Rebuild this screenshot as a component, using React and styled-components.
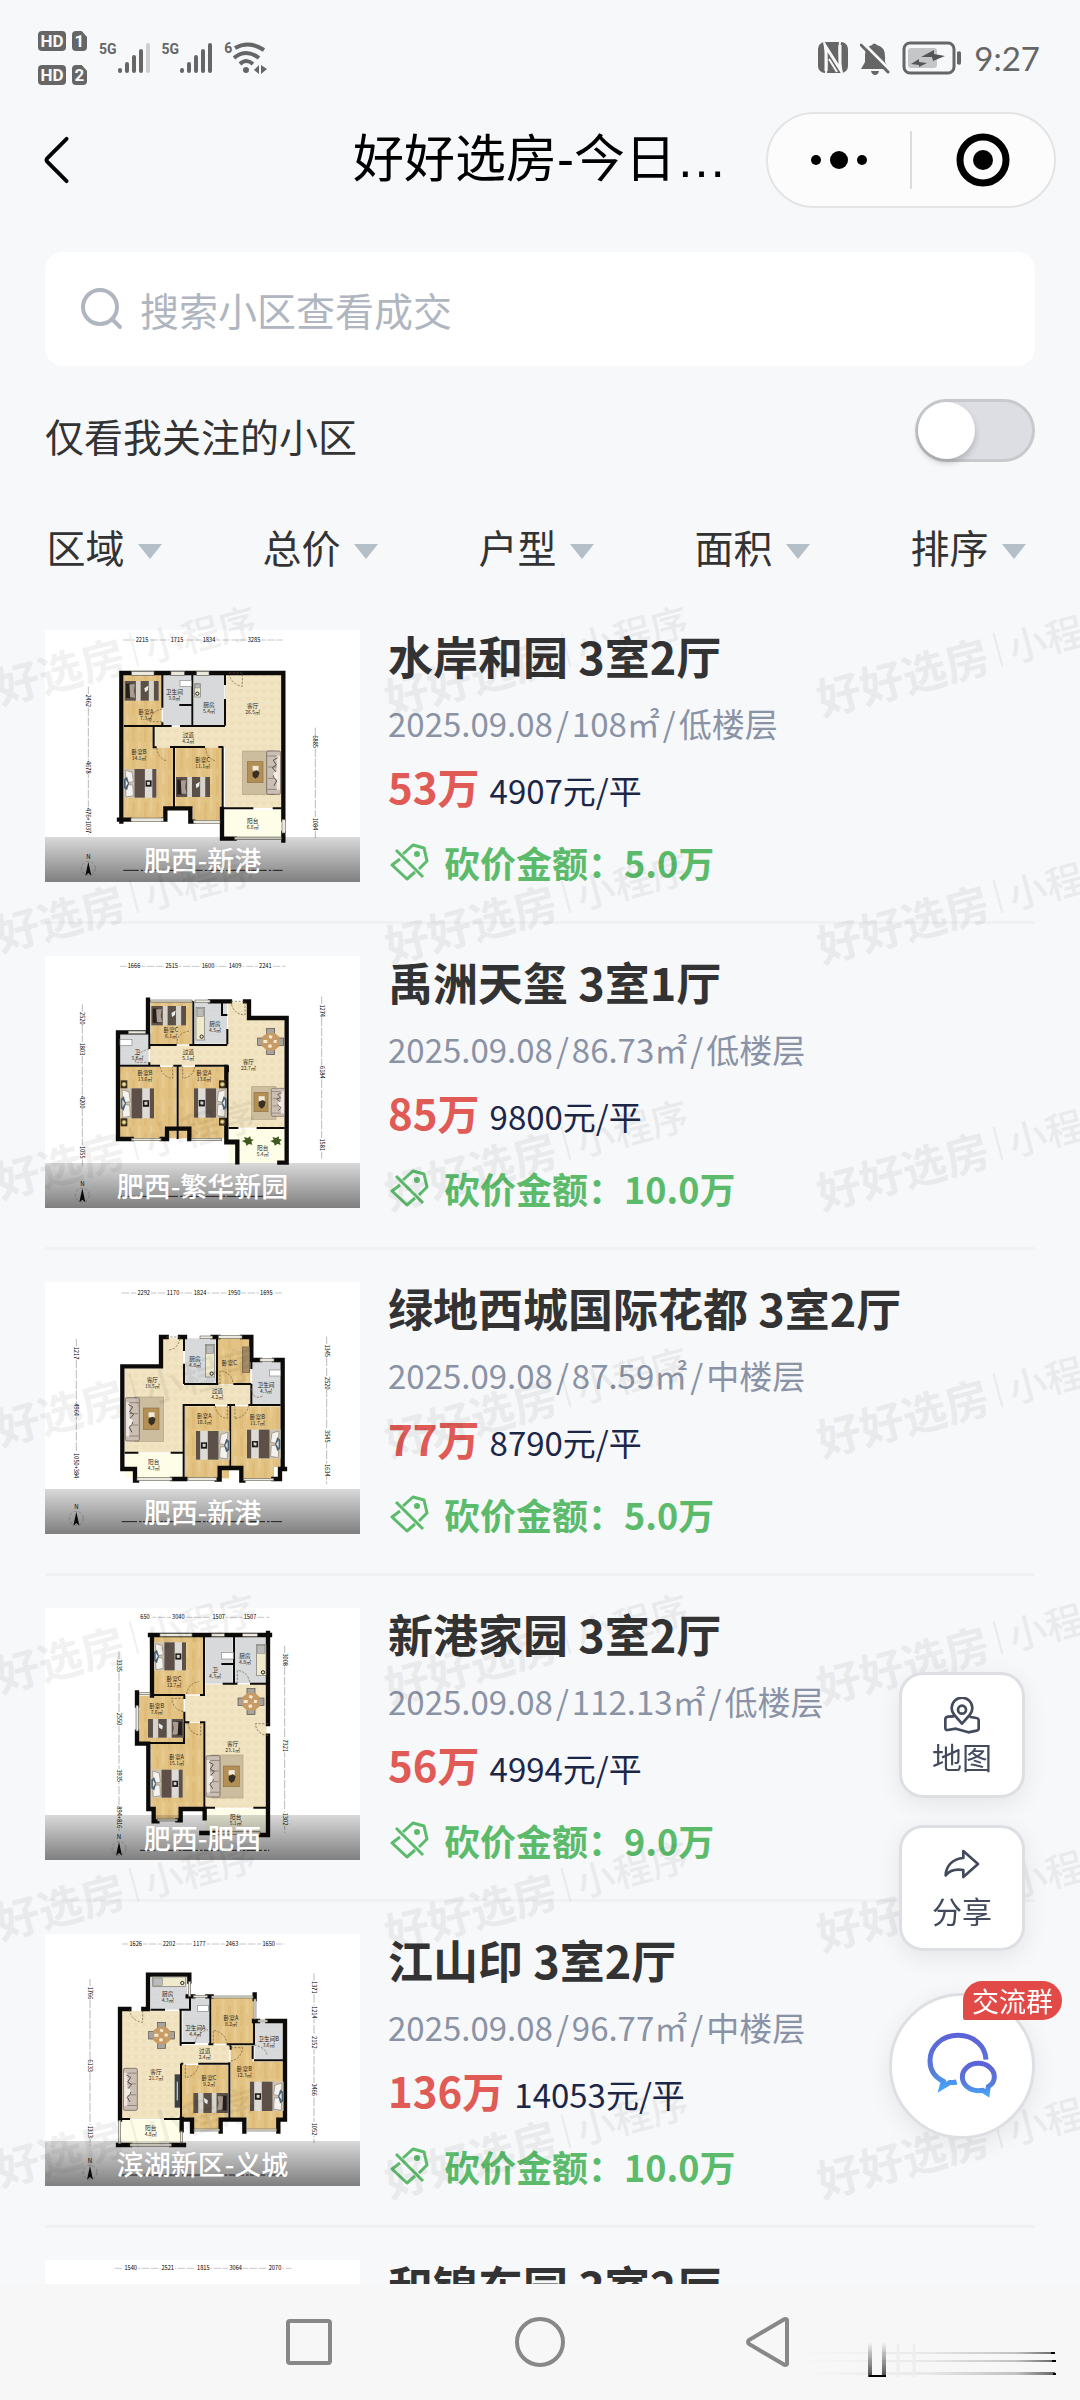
import React, { useState } from 'react';
import styled, { createGlobalStyle, css } from 'styled-components';

const GlobalStyle = createGlobalStyle`
	* {
		box-sizing: border-box;
	}
	body {
		margin: 0;
		background: #f7f8fa;
		font-family: 'Noto Sans CJK SC', 'Noto Sans', sans-serif;
		color: #333;
	}
	button, input, select {
		font-family: inherit;
		color: inherit;
		margin: 0;
		padding: 0;
		border: none;
		background: none;
	}
	h1, h2, p, ul {
		margin: 0;
		padding: 0;
	}
`;

/* ---------- floor plans ---------- */

const FILL = { wood: 'url(#wood)', tile: 'url(#tile)', grey: 'url(#greyTile)', balcony: '#fdfde8' };

// all plans share the same 945 x 756 space
const plans = {
	p1: {
		top: 63,
		rooms: [
			['wood', 282, 198, 113, 152], ['grey', 399, 198, 85, 152], ['grey', 491, 198, 92, 152],
			['tile', 585, 198, 170, 399], ['tile', 375, 354, 213, 62], ['wood', 282, 354, 88, 278],
			['wood', 282, 416, 148, 180], ['wood', 282, 590, 118, 40], ['wood', 436, 416, 140, 180],
			['wood', 488, 590, 88, 44], ['balcony', 582, 602, 174, 86],
		],
		thick: 'M267 632H300M274 638V192H760V632M760 672V695M400 632H406V598H481V638H490M576 600V689H614',
		thin: 'M397 198V296M397 340V350M487 198V350M585 198V228M585 270V350M282 351H425M450 351H585M448 288H487M371 351V415H380M420 414H525M565 414H580M432 414V595M578 414V600M582 598H670M728 598H754',
		windows: [[305, 187, 67, 12], [423, 187, 40, 12], [500, 187, 37, 12], [303, 627, 97, 10], [490, 634, 80, 9], [614, 684, 140, 8], [756, 632, 10, 40]],
		doors: ['M597 192H637V232Q608 228 597 198', 'M397 300Q360 308 360 338H397', 'M380 416Q384 450 412 456', 'M527 416Q530 450 558 456'],
		singles: [[284, 216, 102, 59], [438, 504, 102, 60]],
		doubles: [[282, 480, 97, 86]],
		sofas: [[710, 426, 42, 130, 1]], rugs: [[638, 426, 95, 131, 652, 458, 47, 63]],
		sinks: [[450, 214, 34, 18]], stoves: [[494, 224, 17, 40]],
		labels: [['卧室A', 348, 314, '7.3㎡'], ['卫生间', 433, 256, '3.0㎡'], ['厨房', 537, 295, '5.4㎡'], ['客厅', 668, 298, '26.5㎡'], ['过道', 475, 384, '4.2㎡'], ['卧室B', 327, 434, '14.1㎡'], ['卧室C', 518, 458, '11.1㎡'], ['阳台', 668, 641, '6.8㎡']],
		dims: [[336, '2215'], [441, '1715'], [537, '1834'], [672, '3285']], dimY: 99, span: [280, 758],
		left: [175, [275, '2462'], [475, '4678'], [635, '476+1037']], right: [856, [398, '6885'], [645, '1084']],
		bottom: 784, north: [175, 778],
	},
	p2: {
		top: 51,
		rooms: [
			['wood', 362, 190, 124, 126], ['grey', 270, 284, 86, 94], ['grey', 495, 190, 96, 124],
			['tile', 594, 190, 60, 60], ['tile', 594, 240, 170, 326], ['tile', 360, 320, 240, 60],
			['wood', 270, 384, 170, 214], ['wood', 445, 384, 145, 214], ['balcony', 596, 570, 170, 102],
		],
		thick: 'M354 182V280H264V600H305M395 600H411V569H478V600M589 384V610H622V670M590 608H622M354 280H348M540 187H600M645 187H657V237H770V671H748',
		thin: 'M358 318H440M478 318H592M358 284V330M358 370V380M490 187V318M576 192V228H592M270 380H390M430 380H455M495 380H592M443 380V600M592 270V316M594 380V400M596 567H625M680 567H764M362 187H487',
		windows: [[362, 183, 124, 6], [295, 276, 52, 8], [495, 183, 45, 8], [305, 598, 88, 7], [485, 598, 90, 7]],
		doors: ['M603 187H645V228Q610 226 603 190', 'M440 318Q440 280 480 276', 'M358 330Q322 336 316 370H358', 'M390 382Q396 414 428 418V382', 'M495 382Q490 414 458 418V382'],
		singles: [[364, 201, 104, 58]],
		doubles: [[272, 448, 100, 90], [590, 448, -98, 88]],
		sofas: [[724, 448, 40, 84, 1]], rugs: [[664, 443, 74, 98, 672, 460, 42, 58]],
		tables: [[722, 308]], sinks: [[270, 301, 36, 18]], stoves: [[498, 205, 26, 98]],
		lamps: [[282, 436], [282, 550], [577, 436], [577, 548]], plants: [[653, 606], [738, 606]],
		labels: [['卧室C', 423, 280, '6.1㎡'], ['厨房', 555, 260, '4.5㎡'], ['卫', 322, 344, '3.8㎡'], ['过道', 475, 345, '5.1㎡'], ['客厅', 655, 376, '22.7㎡'], ['卧室B', 345, 408, '13.6㎡'], ['卧室A', 522, 408, '13.6㎡'], ['阳台', 698, 632, '5.4㎡']],
		dims: [[312, '1666'], [425, '2515'], [534, '1600'], [615, '1409'], [706, '2241']], dimY: 88, span: [270, 766],
		left: [157, [238, '2520'], [330, '1803'], [490, '4200'], [640, '1055']], right: [875, [215, '1274'], [400, '6184'], [617, '1581']],
		bottom: 772, north: [157, 768],
	},
	p3: {
		top: 39,
		rooms: [
			['tile', 398, 208, 62, 100], ['grey', 465, 208, 92, 134], ['wood', 564, 208, 97, 138],
			['tile', 284, 298, 175, 252], ['tile', 458, 348, 204, 60], ['grey', 666, 278, 86, 130],
			['wood', 465, 412, 132, 216], ['wood', 606, 412, 145, 182], ['wood', 640, 590, 92, 40], ['balcony', 284, 554, 174, 72],
		],
		thick: 'M410 204H393V292H277V600H315V635H321M450 204H465M426 630H466M548 204H565M636 204H664V273H690M732 273H758V599M560 632H569V597H634V635H640M730 630H750V600H765',
		thin: 'M462 208V246M462 284V345M462 345H565M610 345H664M561 204V345M664 273V300M664 345V410M458 408H555M592 408H615M655 408H752M601 408V598M461 408V630M284 551H325M422 551H460',
		windows: [[510, 201, 38, 8], [565, 200, 71, 8], [690, 269, 42, 8], [321, 626, 105, 8], [474, 626, 86, 8], [641, 628, 90, 7]],
		doors: ['M410 204H450V208Q444 240 416 243', 'M570 345V305Q605 310 610 345', 'M664 358Q668 396 700 380', 'M555 410Q560 444 592 448V410', 'M615 448V410M615 448Q650 444 655 410'],
		singles: [], doubles: [[598, 486, -100, 86], [751, 482, -100, 86]],
		sofas: [[286, 386, 42, 130, 0]], rugs: [[315, 384, 86, 133, 340, 417, 47, 65]],
		closets: [[637, 234, 22, 76]], sinks: [[718, 303, 34, 18]], stoves: [[526, 226, 28, 98]],
		labels: [['客厅', 367, 338, '19.5㎡'], ['厨房', 495, 275, '4.8㎡'], ['卧室C', 598, 288, ''], ['卫生间', 708, 354, '4.3㎡'], ['过道', 562, 372, '4.2㎡'], ['卧室A', 523, 448, '10.1㎡'], ['卧室B', 682, 450, '11.7㎡'], ['阳台', 371, 584, '4.3㎡']],
		dims: [[341, '2292'], [429, '1170'], [510, '1824'], [612, '1950'], [709, '1695']], dimY: 78, span: [275, 756],
		left: [139, [252, '1217'], [422, '4964'], [590, '1050+384']], right: [890, [245, '1345'], [343, '2520'], [502, '3545'], [604, '1634']],
		bottom: 758, north: [139, 748],
	},
	p4: {
		top: 57,
		rooms: [
			['wood', 372, 142, 148, 174], ['grey', 526, 142, 82, 142], ['grey', 615, 142, 94, 140],
			['wood', 326, 320, 135, 142], ['tile', 465, 320, 66, 80], ['tile', 526, 286, 184, 370],
			['wood', 362, 402, 158, 254], ['wood', 376, 650, 72, 44], ['balcony', 526, 660, 184, 70],
		],
		thick: 'M360 138H720M366 138V320M321 310V350M321 428V464H355V660H371V697H382M442 694H452V660H524V688M714 132V405M714 440V738H690M514 732H560',
		thin: 'M522 142V318H510M366 318H465M612 142V284M574 225H612M578 284H622M660 284H712M463 318V330M463 368V400H478M462 400V462H326M510 400H523V660M524 656H555M670 656H712',
		windows: [[390, 134, 96, 8], [545, 134, 38, 8], [638, 134, 44, 8], [318, 350, 7, 76], [328, 311, 32, 6], [382, 690, 60, 6], [560, 728, 130, 8]],
		doors: ['M470 316Q474 282 508 278', 'M622 284V244Q655 248 660 284', 'M463 328H425Q430 364 463 368', 'M474 402Q478 436 512 438V402', 'M714 404H676Q680 436 714 440'],
		singles: [[460, 390, -106, 56]], doubles: [[372, 160, 96, 84], [364, 542, 94, 84]],
		sofas: [[528, 500, 42, 124, 0]], rugs: [[545, 498, 94, 129, 580, 531, 48, 62]],
		tables: [[663, 338]], sinks: [[574, 190, 36, 20]], stoves: [[680, 166, 28, 94]],
		labels: [['卧室C', 432, 275, '12.7㎡'], ['卫', 555, 248, '4.3㎡'], ['厨房', 645, 208, '4.8㎡'], ['卧室B', 380, 356, '7.6㎡'], ['客厅', 608, 470, '23.1㎡'], ['卧室A', 440, 510, '15.1㎡'], ['阳台', 617, 690, '5.1㎡']],
		dims: [[345, '650'], [445, '3040'], [566, '1507'], [660, '1507']], dimY: 91, span: [330, 718],
		left: [267, [230, '3335'], [390, '2550'], [560, '3935'], [685, '894+816']], right: [764, [212, '3008'], [470, '7321'], [690, '1302']],
		bottom: 784, north: [267, 778],
	},
	p5: {
		top: 45,
		rooms: [
			['grey', 362, 174, 110, 98], ['tile', 276, 276, 175, 324], ['grey', 458, 238, 80, 134],
			['wood', 545, 236, 126, 138], ['tile', 450, 378, 148, 56], ['grey', 674, 312, 86, 108],
			['wood', 456, 438, 138, 160], ['wood', 488, 590, 84, 42], ['wood', 602, 380, 66, 220], ['wood', 602, 428, 160, 170],
			['wood', 650, 594, 92, 38], ['balcony', 274, 602, 180, 74],
		],
		thick: 'M478 188V167H354V270H340M298 270H270V602M264 678H300M424 678H462M455 600V634M455 602H486V638M572 638V602H643V638M745 638V602H765V306H712M684 306H672M674 240V226M473 232H490M532 232H545',
		thin: 'M362 272H405M448 272H480V232M452 272V380M452 372H495M541 232V376M535 376H550M590 376H672V300M598 380H602M598 430V600M602 380V392M668 420V380M672 424H762M452 434H460M505 434H598M453 434V600M270 600H300M402 600H455',
		windows: [[476, 188, 6, 44], [490, 229, 42, 6], [545, 231, 124, 6], [672, 240, 6, 60], [684, 303, 28, 6], [492, 630, 76, 6], [650, 630, 90, 6], [300, 674, 124, 8], [266, 604, 6, 70], [452, 636, 5, 36]],
		doors: ['M298 272Q304 306 338 310V272', 'M495 372Q500 340 534 332', 'M550 376V334Q586 340 592 376', 'M602 386H638Q634 420 602 426', 'M466 436V476Q500 470 506 436', 'M672 378Q706 384 712 410'],
		singles: [[594, 522, -104, 60]], doubles: [[760, 488, -100, 88]],
		sofas: [[280, 448, 42, 126, 0]], rugs: [], tables: [[395, 349]], tvs: [[434, 466, 16, 100]],
		sinks: [[503, 259, 32, 18]], stoves: [[368, 174, 98, 28]],
		labels: [['厨房', 413, 232, '4.3㎡'], ['卫生间A', 496, 332, '4.4㎡'], ['卧室A', 603, 304, '8.2㎡'], ['卫生间B', 716, 366, '3.6㎡'], ['过道', 524, 402, '2.4㎡'], ['客厅', 378, 464, '21.7㎡'], ['卧室C', 537, 482, '9.2㎡'], ['卧室B', 643, 456, '12.3㎡'], ['阳台', 362, 634, '4.8㎡']],
		dims: [[317, '1626'], [417, '2202'], [508, '1177'], [606, '2463'], [716, '1650']], dimY: 81, span: [276, 764],
		left: [180, [222, '1766'], [440, '6133'], [638, '1313']], right: [852, [205, '1371'], [280, '1214'], [370, '2152'], [512, '3466'], [630, '1052']],
		bottom: 768, north: [180, 760],
	},
	p6: {
		top: 40,
		rooms: [], windows: [], doors: [], singles: [], doubles: [], sofas: [], rugs: [], labels: [],
		dims: [[302, '1540'], [413, '2521'], [520, '1815'], [617, '3064'], [735, '2070']], dimY: 71, span: [254, 784],
	},
};

const SingleBed = ({ box: [x, y, w, h] }) => (
	<g transform={`translate(${x} ${y}) scale(${w / 100} ${h / 60})`}>
		<rect width='100' height='60' fill='#d8d3ca' />
		<rect width='33' height='60' fill='#5d5048' />
		<rect x='4' y='8' width='16' height='44' fill='#241f1d' />
		<path d='M14 10h16l-3 20 4 20H16z' fill='#a89c92' />
		<rect x='47' width='24' height='60' fill='#5b5048' />
		<rect x='86' width='14' height='60' fill='#5b5048' />
		<path d='M58 22l12-8-2 14-8 6z' fill='#eee' />
	</g>
);

const DoubleBed = ({ box: [x, y, w, h] }) => (
	<g transform={`translate(${x} ${y}) scale(${w / 96} ${h / 86})`}>
		<rect width='96' height='86' fill='#dedbd6' />
		<rect width='30' height='86' fill='#cfc2ae' />
		<path d='M4 4l20 6 4 28-22 4zM4 46l22 2 2 32-22 4z' fill='#f4f2ee' stroke='#8c8478' strokeWidth='2' />
		<path d='M0 30l9-7 6 20-6 21-9-7z' fill='#4f6272' />
		<path d='M5 32l7 11-7 11z' fill='#dfe7ec' />
		<rect x='31' width='31' height='86' fill='#5c5048' />
		<rect x='84' width='12' height='86' fill='#5c5048' />
		<rect x='64' y='34' width='18' height='19' fill='#1d1b1a' />
		<path d='M68 39l9-1v9l-8 1z' fill='#d8d3ca' />
	</g>
);

const Sofa = ({ box: [x, y, w, h, flip] }) => (
	<g transform={`translate(${flip ? x + w : x} ${y}) scale(${(flip ? -w : w) / 42} ${h / 130})`}>
		<rect width='42' height='130' rx='5' fill='#cbbfb4' stroke='#5b4d47' strokeWidth='2' />
		<rect x='2' y='14' width='10' height='102' fill='#eee6df' />
		<path d='M12 15h28M12 48h26M12 82h26M12 115h28' stroke='#76665e' strokeWidth='2' />
		<path d='M9 20l13 8-9 14 12 8-12 14 9 12-10 14 8 14' fill='none' stroke='#594d4b' strokeWidth='3' />
		<path d='M10 60l12 6-4 16-10 4z' fill='#f3eeea' />
	</g>
);

const DiningTable = ({ at: [x, y] }) => (
	<g transform={`translate(${x} ${y})`}>
		<g fill='#a9a39d' stroke='#544c46' strokeWidth='2'>
			<rect x='-12' y='-39' width='24' height='16' />
			<rect x='-12' y='23' width='24' height='16' />
			<rect x='-39' y='-11' width='16' height='22' />
			<rect x='23' y='-11' width='16' height='22' />
		</g>
		<path d='M-26-14L-10-26H12L26-14V14L12 26H-12L-26 14z' fill='#c79b65' />
		<path d='M-22-5h12v9h-12zM-4-20l10 3-3 8-9-3zM10-6l9 2-2 8-9-1zM-8 10l10-2 2 9-10 2z' fill='#f6ead4' />
	</g>
);

const Dimension = ({ line, marks }) => (
	<g>
		<path d={`M${line} ${marks[0][0] - 42}V${marks[marks.length - 1][0] + 42}`} stroke='#999' strokeWidth='2' strokeDasharray='26 5' />
		{marks.map(([y, text]) => (
			<g key={y} transform={`translate(${line} ${y}) rotate(90)`}>
				<rect x={-text.length * 5} y='-9' width={text.length * 10} height='18' fill='#fff' />
				<text textAnchor='middle' y='6' fontSize='17'>{text}</text>
			</g>
		))}
	</g>
);

function FloorPlan({ plan, label }) {
	const p = plans[plan];
	return (
		<Plan viewBox={`45 ${p.top} 945 756`} role='img' aria-label={label}>
			<rect x='45' y={p.top} width='945' height='756' fill='#fff' />
			{p.rooms.map(([kind, x, y, w, h], i) => (
				<rect key={i} x={x} y={y} width={w} height={h} fill={FILL[kind]} />
			))}
			<path d={p.thick} fill='none' stroke='#0d0b09' strokeWidth='13' strokeLinecap='square' strokeLinejoin='miter' />
			<path d={p.thin} fill='none' stroke='#0d0b09' strokeWidth='6' />
			{p.windows.map(([x, y, w, h], i) => (
				<rect key={i} x={x} y={y} width={w} height={h} fill='#eceade' stroke='#6d6b60' strokeWidth='2' />
			))}
			{p.doors.map((d) => (
				<path key={d} d={d} fill='none' stroke='#6b5a3a' strokeWidth='2' strokeDasharray='7 4' />
			))}
			{p.rugs.map(([x, y, w, h, tx, ty, tw, th], i) => (
				<g key={i}>
					<rect x={x} y={y} width={w} height={h} fill='#cdbd9f' stroke='#b3a184' strokeWidth='2' />
					<rect x={tx} y={ty} width={tw} height={th} fill='#b48f55' stroke='#8d7347' strokeWidth='2' />
					<rect x={tx + tw / 3} y={ty + th / 5} width='18' height='14' fill='#f0eadc' />
					<path d={`M${tx + tw / 3} ${ty + th / 2}l12-6 9 6-4 14-9 6-8-8z`} fill='#352f25' />
				</g>
			))}
			{p.singles.map((b, i) => <SingleBed key={i} box={b} />)}
			{p.doubles.map((b, i) => <DoubleBed key={i} box={b} />)}
			{p.sofas.map((b, i) => <Sofa key={i} box={b} />)}
			{(p.tables || []).map((b, i) => <DiningTable key={i} at={b} />)}
			{(p.tvs || []).map(([x, y, w, h]) => (
				<g key={x}>
					<rect x={x} y={y} width={w} height={h} fill='#3b4146' />
					<rect x={x + 6} y={y + 22} width='4' height={h - 44} fill='#b9c2c8' />
				</g>
			))}
			{(p.closets || []).map(([x, y, w, h]) => (
				<rect key={x} x={x} y={y} width={w} height={h} fill='#a28b66' stroke='#6c5b40' strokeWidth='2' />
			))}
			{(p.sinks || []).map(([x, y, w, h]) => (
				<rect key={x} x={x} y={y} width={w} height={h} fill='#fff' stroke='#888' strokeWidth='2' />
			))}
			{(p.stoves || []).map(([x, y, w, h]) => (
				<g key={x}>
					<rect x={x} y={y} width={w} height={h} fill='#eeeacb' stroke='#777' strokeWidth='2' />
					<rect x={x + 3} y={y + 3} width={w > h ? 26 : w - 6} height={w > h ? h - 6 : h / 4} fill='#bbb' stroke='#444' />
					<circle cx={x + w - 9} cy={y + h - 10} r='5' fill='none' stroke='#222' strokeWidth='3' />
				</g>
			))}
			{(p.lamps || []).map(([x, y]) => (
				<g key={`${x}-${y}`}>
					<rect x={x - 10} y={y - 12} width='20' height='24' fill='#3c2d1b' />
					<circle cx={x} cy={y} r='6' fill='#e6d9a0' stroke='#a8924f' strokeWidth='2' />
				</g>
			))}
			{(p.plants || []).map(([x, y]) => (
				<path key={x} d={`M${x - 17} ${y}l10-4-4-8 11 3 8-5 1 8 9 2-7 6 3 9-10-2-8 5-2-8z`} fill='#40571d' />
			))}
			<g fill='#2d2416' fontSize='17' textAnchor='middle'>
				{p.labels.map(([name, x, y, area]) => (
					<g key={name}>
						<text x={x} y={y}>{name}</text>
						<text x={x} y={y + 18} fontSize='15'>{area}</text>
					</g>
				))}
			</g>
			<path d={`M${p.span[0]} ${p.dimY - 6}H${p.span[1]}`} stroke='#aaa' strokeWidth='2' strokeDasharray='22 5' />
			{p.dims.map(([x, text]) => (
				<g key={x}>
					<rect x={x - 22} y={p.dimY - 15} width='44' height='18' fill='#fff' />
					<text x={x} y={p.dimY} textAnchor='middle' fontSize='17'>{text}</text>
				</g>
			))}
			{p.left && <Dimension line={p.left[0]} marks={p.left.slice(1)} />}
			{p.right && <Dimension line={p.right[0]} marks={p.right.slice(1)} />}
			{p.bottom && (
				<path d={`M${p.span[0]} ${p.bottom}H${p.span[1]}`} stroke='#333' strokeWidth='3' strokeDasharray='46 6 8 4' />
			)}
			{p.north && (
				<g transform={`translate(${p.north[0]} ${p.north[1]})`}>
					<text y='-28' textAnchor='middle' fontSize='18'>N</text>
					<circle r='21' fill='none' stroke='#777' strokeWidth='1' strokeDasharray='10 5' />
					<path d='M0-20L9 22 0 14-9 22z' fill='#111' />
				</g>
			)}
		</Plan>
	);
}

const PlanPatterns = () => (
	<HiddenDefs width='0' height='0' aria-hidden='true'>
		<defs>
			<pattern id='wood' width='36' height='80' patternUnits='userSpaceOnUse'>
				<rect width='36' height='80' fill='#e4c484' />
				<rect width='9' height='46' fill='#e8cb91' />
				<rect x='18' y='20' width='9' height='60' fill='#dfbc79' />
				<path d='M9 0V80M18 0V80M27 0V80' stroke='#dab671' />
			</pattern>
			<pattern id='tile' width='24' height='24' patternUnits='userSpaceOnUse'>
				<rect width='24' height='24' fill='#f1e4c2' />
				<rect width='12' height='12' fill='#eee0ba' />
				<path d='M0 0H24M0 0V24' stroke='#e9dab2' />
			</pattern>
			<pattern id='greyTile' width='12' height='12' patternUnits='userSpaceOnUse'>
				<rect width='12' height='12' fill='#d8dadb' />
				<path d='M0 0H12M0 0V12' stroke='#cbcecf' />
			</pattern>
		</defs>
	</HiddenDefs>
);

/* ---------- icons ---------- */

const Signal = ({ weak }) => (
	<svg width='32' height='32' viewBox='0 0 32 32' strokeWidth='4' strokeLinecap='round' stroke='#666'>
		<path d='M2 28V29M9 22V29M16 15V29M23 9V29' />
		<path d='M30 3V29' stroke={weak ? '#cfcfd0' : '#666'} />
	</svg>
);

const Wifi = () => (
	<svg width='36' height='34' viewBox='0 0 36 34' fill='none' stroke='#666' strokeWidth='4'>
		<path d='M2 7Q16-1 31 9M1 17Q13 7 26 17M7 23Q13 17 20 23' />
		<circle cx='13' cy='29' r='3' fill='#666' stroke='none' />
		<path d='M26 24v9l-5-4zM28 24v9l6-5z' fill='#666' stroke='none' />
	</svg>
);

const Nfc = () => (
	<svg width='30' height='32' viewBox='0 0 30 32'>
		<rect width='30' height='31' rx='7' fill='#666' />
		<path d='M6 0Q10 16 8 31M22 0Q20 16 24 31' stroke='#f7f8fa' strokeWidth='2' fill='none' />
		<path d='M8 29V5L22 27V3' stroke='#f7f8fa' strokeWidth='3' fill='none' />
		<path d='M11 17L19 30' stroke='#f7f8fa' strokeWidth='2' />
	</svg>
);

const BellOff = () => (
	<svg width='30' height='33' viewBox='0 0 30 33'>
		<path d='M12 3Q14 0 17 3Q25 5 25 14V20L29 27H1L5 20V13Q5 5 12 3z' fill='#666' />
		<path d='M11 29H19Q18 33 15 33Q12 33 11 29z' fill='#666' />
		<path d='M3 1L31 29' stroke='#f7f8fa' strokeWidth='3' />
		<path d='M1 3L28 30' stroke='#666' strokeWidth='3' strokeLinecap='round' />
	</svg>
);

const Battery = () => (
	<svg width='60' height='34' viewBox='0 0 60 34'>
		<rect x='2' y='2' width='50' height='30' rx='6' fill='none' stroke='#666' strokeWidth='3' />
		<rect x='6' y='7' width='29' height='20' rx='3' fill='#c5c6c7' />
		<path d='M55 11Q59 9 59 12V22Q59 25 55 23z' fill='#666' />
		<path d='M19 16L32 9V13L43 15L31 20L30 16zM9 23L17 18V21L25 22L17 26V24z' fill='#555' />
	</svg>
);

const TagOff = () => (
	<svg width='42' height='40' viewBox='0 0 42 40' fill='none' stroke='#5bbb6b' strokeWidth='3' strokeLinejoin='round'>
		<path d='M8 8L35 35M15 12L25 3L36 6L39 19L31 27M12 17L4 23L19 37L27 30' />
		<circle cx='29' cy='12' r='3' fill='#5bbb6b' stroke='none' />
	</svg>
);

const MapPin = () => (
	<svg width='38' height='38' viewBox='249 170 114 114' fill='none' stroke='#424a5c' strokeWidth='8' strokeLinejoin='round' strokeLinecap='round'>
		<path d='M306 250L283 224A31 31 0 1 1 329 224Z' />
		<circle cx='306' cy='208' r='12' />
		<path d='M280 228L264 229Q256 230 256 237V262Q256 270 263 269L288 265L325 276L350 271Q356 270 356 264V240Q356 234 349 233L332 230' />
	</svg>
);

const ShareArrow = () => (
	<svg width='38' height='32' viewBox='249 628 114 96' fill='none' stroke='#424a5c' strokeWidth='8' strokeLinejoin='round'>
		<path d='M310 637L354 676L310 715V694C286 690 268 696 257 710C258 682 278 660 310 658Z' />
	</svg>
);

const Chat = () => (
	<svg width='72' height='72' viewBox='198 1180 216 216' fill='none' stroke='url(#chatTone)' strokeWidth='15'>
		<defs>
			<linearGradient id='chatTone' x1='0' y1='0' x2='0' y2='1'>
				<stop offset='0' stopColor='#5c63d8' />
				<stop offset='0.7' stopColor='#587bd8' />
				<stop offset='1' stopColor='#45a2f8' />
			</linearGradient>
		</defs>
		<path d='M378 1269C376 1228 342 1196 294 1196C246 1196 210 1230 210 1272C210 1300 226 1322 250 1334L245 1352L270 1337Q280 1339 290 1336' />
		<path d='M383 1362L385 1350C396 1343 403 1332 403 1321C403 1298 382 1280 355 1280C328 1280 307 1298 307 1321C307 1344 328 1362 355 1362L368 1361L382 1370Z' />
	</svg>
);

/* ---------- data ---------- */

const filters = ['区域', '总价', '户型', '面积', '排序'];

const listings = [
	{ plan: 'p1', area: '肥西-新港', title: '水岸和园 3室2厅', size: '108㎡', floor: '低楼层', price: '53万', unit: '4907元/平', cut: '5.0万' },
	{ plan: 'p2', area: '肥西-繁华新园', title: '禹洲天玺 3室1厅', size: '86.73㎡', floor: '低楼层', price: '85万', unit: '9800元/平', cut: '10.0万' },
	{ plan: 'p3', area: '肥西-新港', title: '绿地西城国际花都 3室2厅', size: '87.59㎡', floor: '中楼层', price: '77万', unit: '8790元/平', cut: '5.0万' },
	{ plan: 'p4', area: '肥西-肥西', title: '新港家园 3室2厅', size: '112.13㎡', floor: '低楼层', price: '56万', unit: '4994元/平', cut: '9.0万' },
	{ plan: 'p5', area: '滨湖新区-义城', title: '江山印 3室2厅', size: '96.77㎡', floor: '中楼层', price: '136万', unit: '14053元/平', cut: '10.0万' },
	{ plan: 'p6', area: '', title: '和锦东园 3室2厅' },
];

function Listing({ item }) {
	return (
		<Row>
			<Thumb>
				<FloorPlan plan={item.plan} label={item.title} />
				{item.area && <Caption>{item.area}</Caption>}
			</Thumb>
			<Info>
				<Title>{item.title}</Title>
				{item.price && (
					<>
						<Meta>
							<span>2025.09.08</span>
							<Slash>/</Slash>
							<span>{item.size}</span>
							<Slash>/</Slash>
							<span>{item.floor}</span>
						</Meta>
						<PriceLine>
							<Price>{item.price}</Price>
							<UnitPrice>{item.unit}</UnitPrice>
						</PriceLine>
						<Cut>
							<TagOff />
							<span>砍价金额：{item.cut}</span>
						</Cut>
					</>
				)}
			</Info>
		</Row>
	);
}

function App() {
	const [onlyFollowed, setOnlyFollowed] = useState(false);
	const [keyword, setKeyword] = useState('');

	return (
		<Screen>
			<GlobalStyle />
			<PlanPatterns />
			<StatusBar>
				<Sims>
					<Sim><Hd>HD</Hd><SimNo>1</SimNo></Sim>
					<Sim><Hd>HD</Hd><SimNo>2</SimNo></Sim>
				</Sims>
				<Network><NetLabel>5G</NetLabel><Signal weak /></Network>
				<Network><NetLabel>5G</NetLabel><Signal /></Network>
				<Network><NetLabel>6</NetLabel><Wifi /></Network>
				<StatusRight>
					<Nfc />
					<BellOff />
					<Battery />
					<Clock>9:27</Clock>
				</StatusRight>
			</StatusBar>

			<NavBar>
				<Back aria-label='返回'>
					<svg width='26' height='48' viewBox='0 0 26 50' fill='none' stroke='#000' strokeWidth='4' strokeLinecap='round'>
						<path d='M23 3L3 23Q1 25 3 27L23 47' />
					</svg>
				</Back>
				<PageTitle>好好选房-今日…</PageTitle>
				<Capsule>
					<CapsuleButton aria-label='更多'>
						<svg width='58' height='20' viewBox='0 0 58 20'>
							<circle cx='6' cy='10' r='5' />
							<circle cx='29' cy='10' r='9' />
							<circle cx='52' cy='10' r='5' />
						</svg>
					</CapsuleButton>
					<CapsuleLine />
					<CapsuleButton aria-label='关闭'>
						<svg width='54' height='54' viewBox='0 0 54 54'>
							<circle cx='27' cy='27' r='23' fill='none' stroke='#000' strokeWidth='7' />
							<circle cx='27' cy='27' r='10' />
						</svg>
					</CapsuleButton>
				</Capsule>
			</NavBar>

			<SearchBox>
				<svg width='42' height='42' viewBox='0 0 42 42' fill='none' stroke='#b0b6bf' strokeWidth='4' strokeLinecap='round'>
					<circle cx='19' cy='19' r='17' />
					<path d='M32 32L39 39' />
				</svg>
				<SearchInput
					aria-label='搜索'
					placeholder='搜索小区查看成交'
					value={keyword}
					onChange={(e) => setKeyword(e.target.value)}
				/>
			</SearchBox>

			<FollowRow>
				<FollowLabel htmlFor='followed'>仅看我关注的小区</FollowLabel>
				<Switch
					id='followed'
					type='checkbox'
					checked={onlyFollowed}
					onChange={(e) => setOnlyFollowed(e.target.checked)}
				/>
			</FollowRow>

			<Filters>
				{filters.map((name) => (
					<Filter key={name}>
						<FilterSelect aria-label={name}>
							<option>{name}</option>
						</FilterSelect>
						<Arrow />
					</Filter>
				))}
			</Filters>

			<List>
				{listings.map((item) => (
					<Listing key={item.plan} item={item} />
				))}
				<Watermarks aria-hidden='true'>
					{Array.from({ length: 21 }, (_, i) => (
						<Mark key={i}>
							<strong>好好选房</strong>
							<MarkLine />
							<span>小程序</span>
						</Mark>
					))}
				</Watermarks>
			</List>

			<Floating>
				<FloatButton>
					<MapPin />
					<span>地图</span>
				</FloatButton>
				<FloatButton $wide>
					<ShareArrow />
					<span>分享</span>
				</FloatButton>
				<ChatButton aria-label='交流群'>
					<Chat />
					<ChatBadge>交流群</ChatBadge>
				</ChatButton>
			</Floating>

			<SystemBar>
				<SystemButton aria-label='任务'>
					<svg width='50' height='50' viewBox='0 0 50 50'><rect x='4' y='4' width='42' height='42' rx='2' /></svg>
				</SystemButton>
				<SystemButton aria-label='主屏幕'>
					<svg width='50' height='50' viewBox='0 0 50 50'><circle cx='25' cy='25' r='23' /></svg>
				</SystemButton>
				<SystemButton aria-label='返回'>
					<svg width='50' height='50' viewBox='0 0 50 50'><path d='M41 3V47Q40 49 37 47L3 27Q1 25 3 23L37 3Q40 1 41 3z' /></svg>
				</SystemButton>
				<Streaks viewBox='790 2310 290 90' aria-hidden='true'>
					<defs>
						<linearGradient id='streak' x1='0' x2='1'>
							<stop offset='0' stopColor='#000' stopOpacity='0' />
							<stop offset='0.5' stopColor='#000' stopOpacity='0.06' />
							<stop offset='0.85' stopColor='#000' stopOpacity='0.22' />
							<stop offset='1' stopColor='#000' stopOpacity='0.6' />
						</linearGradient>
						<linearGradient id='post' x1='0' x2='0' y1='0' y2='1'>
							<stop offset='0' stopColor='#000' stopOpacity='0' />
							<stop offset='1' stopColor='#000' stopOpacity='0.7' />
						</linearGradient>
					</defs>
					<g fill='url(#streak)'>
						<rect x='800' y='2352' width='255' height='2' />
						<rect x='800' y='2360' width='255' height='2' />
						<rect x='800' y='2372' width='255' height='3' />
					</g>
					<rect x='872' y='2343' width='9' height='34' fill='#f7f7f7' />
					<rect x='868' y='2342' width='4' height='35' fill='url(#post)' />
					<rect x='882' y='2342' width='4' height='35' fill='url(#post)' />
					<path d='M869 2376H886' stroke='#000' strokeWidth='2' />
					<path d='M898 2344V2377M914 2344V2377' stroke='#eee' strokeWidth='3' />
					<path d='M1051 2353H1055M1052 2361H1056M1053 2374H1056' stroke='#000' strokeWidth='2' />
				</Streaks>
			</SystemBar>
		</Screen>
	);
}

const Screen = styled.main`
	display: flex;
	flex-direction: column;
	height: 100vh;
	overflow: hidden;
`;

const HiddenDefs = styled.svg`
	position: absolute;
`;

const StatusBar = styled.header`
	display: flex;
	flex: none;
	align-items: center;
	gap: 12px;
	height: 108px;
	padding: 8px 40px 0 38px;
	color: #666;
`;

const Sims = styled.div`
	display: flex;
	flex-direction: column;
	gap: 14px;
`;

const Sim = styled.div`
	display: flex;
	gap: 6px;
`;

const Hd = styled.span`
	width: 28px;
	height: 20px;
	border-radius: 4px;
	background: #666;
	color: #f7f8fa;
	font: bold 17px/20px 'Liberation Sans Narrow', Roboto, sans-serif;
	text-align: center;
`;

const SimNo = styled(Hd)`
	width: 15px;
	clip-path: polygon(0 0, 65% 0, 100% 30%, 100% 100%, 0 100%);
`;

const Network = styled.div`
	display: flex;
	align-items: flex-start;
	gap: 1px;
`;

const NetLabel = styled.span`
	font: bold 14px/14px 'Liberation Sans Narrow', Roboto, sans-serif;
`;

const StatusRight = styled.div`
	display: flex;
	align-items: center;
	gap: 12px;
	margin-left: auto;
`;

const Clock = styled.time`
	font: 33px/36px Lato, Roboto, sans-serif;
`;

const NavBar = styled.nav`
	display: grid;
	flex: none;
	grid-template-columns: 1fr auto 1fr;
	align-items: center;
	height: 104px;
	padding: 0 24px;
`;

const Back = styled.button`
	justify-self: start;
	display: flex;
	padding-left: 20px;
	cursor: pointer;
`;

const PageTitle = styled.h1`
	font-family: 'Liberation Sans', 'Noto Sans CJK SC', sans-serif;
	font-size: 51px;
	font-weight: 400;
	line-height: 72px;
	color: #000;
`;

const Capsule = styled.div`
	display: flex;
	align-items: center;
	justify-self: end;
	width: 290px;
	height: 96px;
	border: 2px solid #e3e4e5;
	border-radius: 48px;
	background: #fcfcfc;
`;

const CapsuleButton = styled.button`
	display: flex;
	flex: 1;
	justify-content: center;
	cursor: pointer;
`;

const CapsuleLine = styled.i`
	width: 2px;
	height: 58px;
	background: #dcdcdc;
`;

const SearchBox = styled.div`
	display: flex;
	flex: none;
	align-items: center;
	gap: 17px;
	height: 114px;
	margin: 40px 45px 0;
	padding: 0 36px;
	border-radius: 18px;
	background: #fff;
`;

const SearchInput = styled.input`
	flex: 1;
	min-width: 0;
	height: 60px;
	font-size: 39px;
	outline: none;
	&::placeholder {
		color: #b0b6c0;
		opacity: 1;
	}
`;

const FollowRow = styled.div`
	display: flex;
	flex: none;
	justify-content: space-between;
	height: 65px;
	margin: 33px 45px 0;
`;

const FollowLabel = styled.label`
	align-self: flex-end;
	font-size: 39px;
	line-height: 58px;
`;

const Switch = styled.input`
	appearance: none;
	width: 120px;
	height: 63px;
	border: 3px solid #c8c9cc;
	border-radius: 32px;
	background: #dcdee3;
	cursor: pointer;
	&::before {
		content: '';
		display: block;
		width: 57px;
		height: 57px;
		border-radius: 50%;
		background: #fff;
		box-shadow: 0 4px 6px rgba(0, 0, 0, 0.2);
	}
	&:checked::before {
		margin-left: auto;
	}
`;

const Filters = styled.div`
	display: grid;
	flex: none;
	grid-template-columns: repeat(5, 1fr);
	height: 64px;
	margin-top: 50px;
`;

const Filter = styled.label`
	display: flex;
	align-items: center;
	justify-content: center;
	gap: 12px;
	padding-right: 8px;
`;

const FilterSelect = styled.select`
	appearance: none;
	font-size: 39px;
	line-height: 58px;
	cursor: pointer;
`;

const Arrow = styled.i`
	margin-top: 10px;
	border: 12px solid transparent;
	border-top: 15px solid #b4bfc7;
	border-bottom: 0;
`;

const List = styled.ul`
	position: relative;
	flex: 1;
	min-height: 0;
	padding: 20px 45px 0;
	overflow: hidden;
	list-style: none;
`;

const Row = styled.li`
	display: flex;
	gap: 28px;
	padding: 32px 0 39px;
	border-bottom: 3px solid #f0f1f3;
`;

const Thumb = styled.div`
	position: relative;
	flex: none;
	width: 315px;
	height: 252px;
`;

const Plan = styled.svg`
	display: block;
	width: 100%;
	height: 100%;
`;

const Caption = styled.p`
	position: absolute;
	left: 0;
	right: 0;
	bottom: 0;
	height: 45px;
	background: linear-gradient(rgba(0, 0, 0, 0.15), rgba(0, 0, 0, 0.5));
	color: #fff;
	font-size: 27px;
	font-weight: 500;
	line-height: 45px;
	text-align: center;
`;

const Info = styled.div`
	flex: 1;
	min-width: 0;
`;

const Title = styled.h2`
	font-size: 45px;
	font-weight: 700;
	line-height: 52px;
	white-space: nowrap;
`;

const Meta = styled.p`
	display: flex;
	margin-top: 21px;
	font-size: 33px;
	line-height: 40px;
	color: #8a93a5;
`;

const Slash = styled.span`
	padding: 0 3px;
`;

const PriceLine = styled.p`
	display: flex;
	align-items: baseline;
	gap: 10px;
	height: 52px;
	margin-top: 17px;
	line-height: 52px;
`;

const Price = styled.strong`
	font-size: 42px;
	color: #e05a56;
`;

const UnitPrice = styled.span`
	font-size: 33px;
	color: #1c2748;
`;

const Cut = styled.p`
	display: flex;
	align-items: center;
	gap: 14px;
	height: 36px;
	margin-top: 32px;
	font-size: 36px;
	font-weight: 700;
	line-height: 36px;
	color: #5bbb6b;
`;

const Watermarks = styled.div`
	position: absolute;
	top: -16px;
	left: -54px;
	display: grid;
	grid-template-columns: repeat(3, 432px);
	grid-auto-rows: 247px;
	pointer-events: none;
	opacity: 0.05;
`;

const Mark = styled.div`
	display: flex;
	align-items: center;
	align-self: start;
	height: 160px;
	color: #000;
	white-space: nowrap;
	transform: rotate(-15deg);
	strong {
		font-size: 44px;
	}
	span {
		font-size: 38px;
		font-weight: 500;
	}
`;

const MarkLine = styled.i`
	width: 2px;
	height: 34px;
	margin: 0 10px;
	background: #000;
`;

const Floating = styled.aside`
	position: fixed;
	right: 45px;
	bottom: 261px;
	display: flex;
	flex-direction: column;
	align-items: center;
	gap: 27px;
`;

const floatSurface = css`
	border: 3px solid #dddfe2;
	background: #fff;
	box-shadow: 0 6px 24px rgba(0, 0, 0, 0.08);
	cursor: pointer;
`;

const FloatButton = styled.button`
	${floatSurface}
	display: flex;
	flex-direction: column;
	align-items: center;
	justify-content: center;
	gap: ${(p) => (p.$wide ? '12px' : '3px')};
	width: 126px;
	height: 126px;
	border-radius: 24px;
	font-size: 30px;
	line-height: 36px;
	color: #424a5c;
`;

const ChatButton = styled.button`
	${floatSurface}
	position: relative;
	display: flex;
	align-items: center;
	justify-content: center;
	width: 146px;
	height: 146px;
	margin-top: 15px;
	border-radius: 50%;
`;

const ChatBadge = styled.span`
	position: absolute;
	top: -15px;
	left: 71px;
	padding: 0 9px;
	border-radius: 20px 20px 20px 2px;
	background: #e24a48;
	color: #fff;
	font-size: 27px;
	line-height: 39px;
	white-space: nowrap;
`;

const SystemBar = styled.footer`
	position: relative;
	display: flex;
	flex: none;
	justify-content: center;
	gap: 181px;
	height: 116px;
	background: #f7f7f7;
`;

const SystemButton = styled.button`
	display: flex;
	align-items: center;
	cursor: pointer;
	svg {
		fill: none;
		stroke: #888;
		stroke-width: 4;
	}
`;

const Streaks = styled.svg`
	position: absolute;
	right: 0;
	bottom: 0;
	width: 290px;
	height: 90px;
	pointer-events: none;
`;

export default App;
